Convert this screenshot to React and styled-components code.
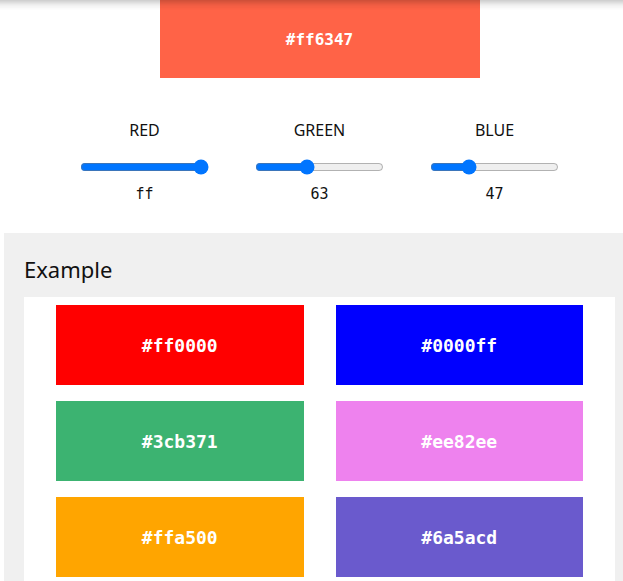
import React, { useState } from "react";
import styled, { createGlobalStyle } from "styled-components";

const Global = createGlobalStyle`
  html { scrollbar-width: none; }
  html, body { margin: 0; padding: 0; background: #ffffff; }
  body { font-family: "Segoe UI", "Noto Sans", sans-serif; color: #111; }
`;

const TopShade = styled.div`
  position: fixed;
  top: 0;
  left: 0;
  right: 0;
  height: 10px;
  pointer-events: none;
  background: linear-gradient(to bottom, rgba(0,0,0,0.2), rgba(0,0,0,0.06) 50%, rgba(0,0,0,0));
  z-index: 10;
`;

const Page = styled.div`
  width: 639px;
  display: flex;
  flex-direction: column;
`;

const Swatch = styled.div`
  width: 320px;
  height: 78px;
  margin: 0 auto;
  background: ${(p) => p.$color};
  color: #fff;
  display: flex;
  align-items: center;
  justify-content: center;
  font-family: "DejaVu Sans Mono", "Liberation Mono", monospace;
  font-weight: bold;
  font-size: 16px;
`;

const Controls = styled.div`
  display: grid;
  grid-template-columns: repeat(3, 175px);
  justify-content: center;
  padding: 41px 0 29px;
`;

const Channel = styled.div`
  display: flex;
  flex-direction: column;
  align-items: center;
`;

const ChannelLabel = styled.div`
  font-size: 16px;
  line-height: 22px;
  height: 22px;
`;

const Range = styled.input`
  width: 129px;
  height: 16px;
  margin: 18px 0 9px;
`;

const ChannelValue = styled.div`
  font-family: "DejaVu Sans Mono", "Liberation Mono", monospace;
  font-size: 15px;
  line-height: 20px;
`;

const Section = styled.section`
  margin: 0 4px;
  background: #f0f0f0;
  padding: 21px 20px 0 20px;
`;

const Heading = styled.h2`
  margin: 0 0 13px;
  font-weight: normal;
  font-size: 22px;
  line-height: 30px;
`;

const Panel = styled.div`
  background: #fff;
  padding: 8px 32px 8px;
  display: grid;
  grid-template-columns: 1fr 1fr;
  column-gap: 32px;
  row-gap: 16px;
`;

const Cell = styled.div`
  height: 80px;
  background: ${(p) => p.$color};
  color: #fff;
  display: flex;
  align-items: center;
  justify-content: center;
  font-family: "DejaVu Sans Mono", "Liberation Mono", monospace;
  font-weight: bold;
  font-size: 18px;
`;

const hex2 = (n) => n.toString(16).padStart(2, "0");

const examples = ["#ff0000", "#0000ff", "#3cb371", "#ee82ee", "#ffa500", "#6a5acd"];

export default function App() {
  const [rgb, setRgb] = useState({ r: 255, g: 99, b: 71 });
  const color = `#${hex2(rgb.r)}${hex2(rgb.g)}${hex2(rgb.b)}`;
  const channels = [
    { key: "r", label: "RED" },
    { key: "g", label: "GREEN" },
    { key: "b", label: "BLUE" },
  ];
  return (
    <>
      <Global />
      <TopShade />
      <Page>
        <Swatch $color={color}>{color}</Swatch>
        <Controls>
          {channels.map((c) => (
            <Channel key={c.key}>
              <ChannelLabel>{c.label}</ChannelLabel>
              <Range
                type="range"
                min={0}
                max={255}
                value={rgb[c.key]}
                onChange={(e) => setRgb({ ...rgb, [c.key]: Number(e.target.value) })}
              />
              <ChannelValue>{hex2(rgb[c.key])}</ChannelValue>
            </Channel>
          ))}
        </Controls>
        <Section>
          <Heading>Example</Heading>
          <Panel>
            {examples.map((c) => (
              <Cell key={c} $color={c}>{c}</Cell>
            ))}
          </Panel>
        </Section>
      </Page>
    </>
  );
}
